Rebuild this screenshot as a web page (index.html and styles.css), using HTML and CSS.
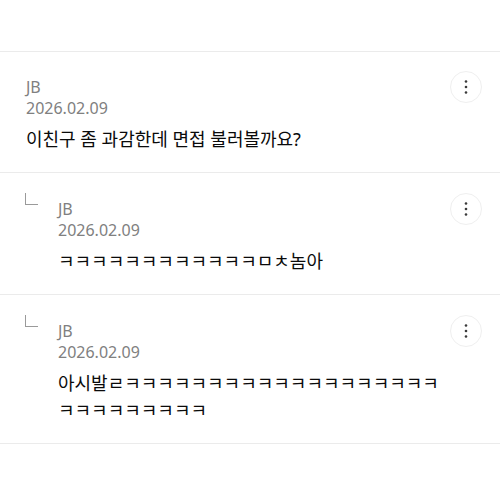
FILE: index.html
```html
<!DOCTYPE html>
<html lang="ko">
    <head>
        <meta charset="utf-8" />
        <title>댓글</title>
        <link rel="stylesheet" href="styles.css">
    </head>

    <body>
        <ul class="comments">
            <li class="comment">
                <div class="comment-body">
                    <div class="author">JB</div>
                    <div class="date">2026.02.09</div>
                    <p class="text">이친구 좀 과감한데 면접 불러볼까요?</p>
                </div>
                <button class="more" type="button" aria-label="더보기">
                    <svg width="32" height="32" viewBox="0 0 32 32"><circle cx="16" cy="10.5" r="1.3"/><circle cx="16" cy="16" r="1.3"/><circle cx="16" cy="21.5" r="1.3"/></svg>
                </button>
            </li>

            <!-- replies -->
            <li class="comment reply">
                <span class="reply-mark"></span>
                <div class="comment-body">
                    <div class="author">JB</div>
                    <div class="date">2026.02.09</div>
                    <p class="text">ㅋㅋㅋㅋㅋㅋㅋㅋㅋㅋㅋㅋㅁㅊ놈아</p>
                </div>
                <button class="more" type="button" aria-label="더보기">
                    <svg width="32" height="32" viewBox="0 0 32 32"><circle cx="16" cy="10.5" r="1.3"/><circle cx="16" cy="16" r="1.3"/><circle cx="16" cy="21.5" r="1.3"/></svg>
                </button>
            </li>
            <li class="comment reply">
                <span class="reply-mark"></span>
                <div class="comment-body">
                    <div class="author">JB</div>
                    <div class="date">2026.02.09</div>
                    <p class="text">아시발ㄹㅋㅋㅋㅋㅋㅋㅋㅋㅋㅋㅋㅋㅋㅋㅋㅋㅋㅋㅋㅋㅋㅋㅋㅋㅋㅋㅋㅋ</p>
                </div>
                <button class="more" type="button" aria-label="더보기">
                    <svg width="32" height="32" viewBox="0 0 32 32"><circle cx="16" cy="10.5" r="1.3"/><circle cx="16" cy="16" r="1.3"/><circle cx="16" cy="21.5" r="1.3"/></svg>
                </button>
            </li>
        </ul>
    </body>
</html>
```

FILE: styles.css
```css
body {
    margin: 0;
    background-color: #fff;
    font-family: "Noto Sans", "Noto Sans CJK KR", sans-serif;
}
.comments {
    list-style: none;
    margin: 51px 0 0 0;
    padding: 0;
    border-top: 1px solid #ebebeb;
}
.comment {
    display: flex;
    align-items: flex-start;
    padding: 25px 18px 19px 26px;
    border-bottom: 1px solid #ebebeb;
}
.reply {
    padding-top: 26px;
    padding-left: 25px;
}
.reply-mark {
    flex-shrink: 0;
    width: 12px;
    height: 11px;
    margin: -6px 20px 0 0;
    border-left: 1px solid #9a9a9a;
    border-bottom: 1px solid #9a9a9a;
}
.comment-body {
    flex: 1;
    min-width: 0;
}
.author,
.date {
    font-size: 16px;
    line-height: 21px;
    color: #808080;
}
.text {
    margin: 7px 0 0 0;
    font-size: 18px;
    line-height: 27px;
    color: #0a0a0a;
    word-break: break-all;
}
.more {
    flex-shrink: 0;
    width: 32px;
    height: 32px;
    margin: -6px 0 0 4px;
    padding: 0;
    border: 1px solid #efefef;
    border-radius: 50%;
    background: #fff;
    fill: #3a3a3a;
}
.more svg {
    display: block;
    margin: -1px;
}
```
